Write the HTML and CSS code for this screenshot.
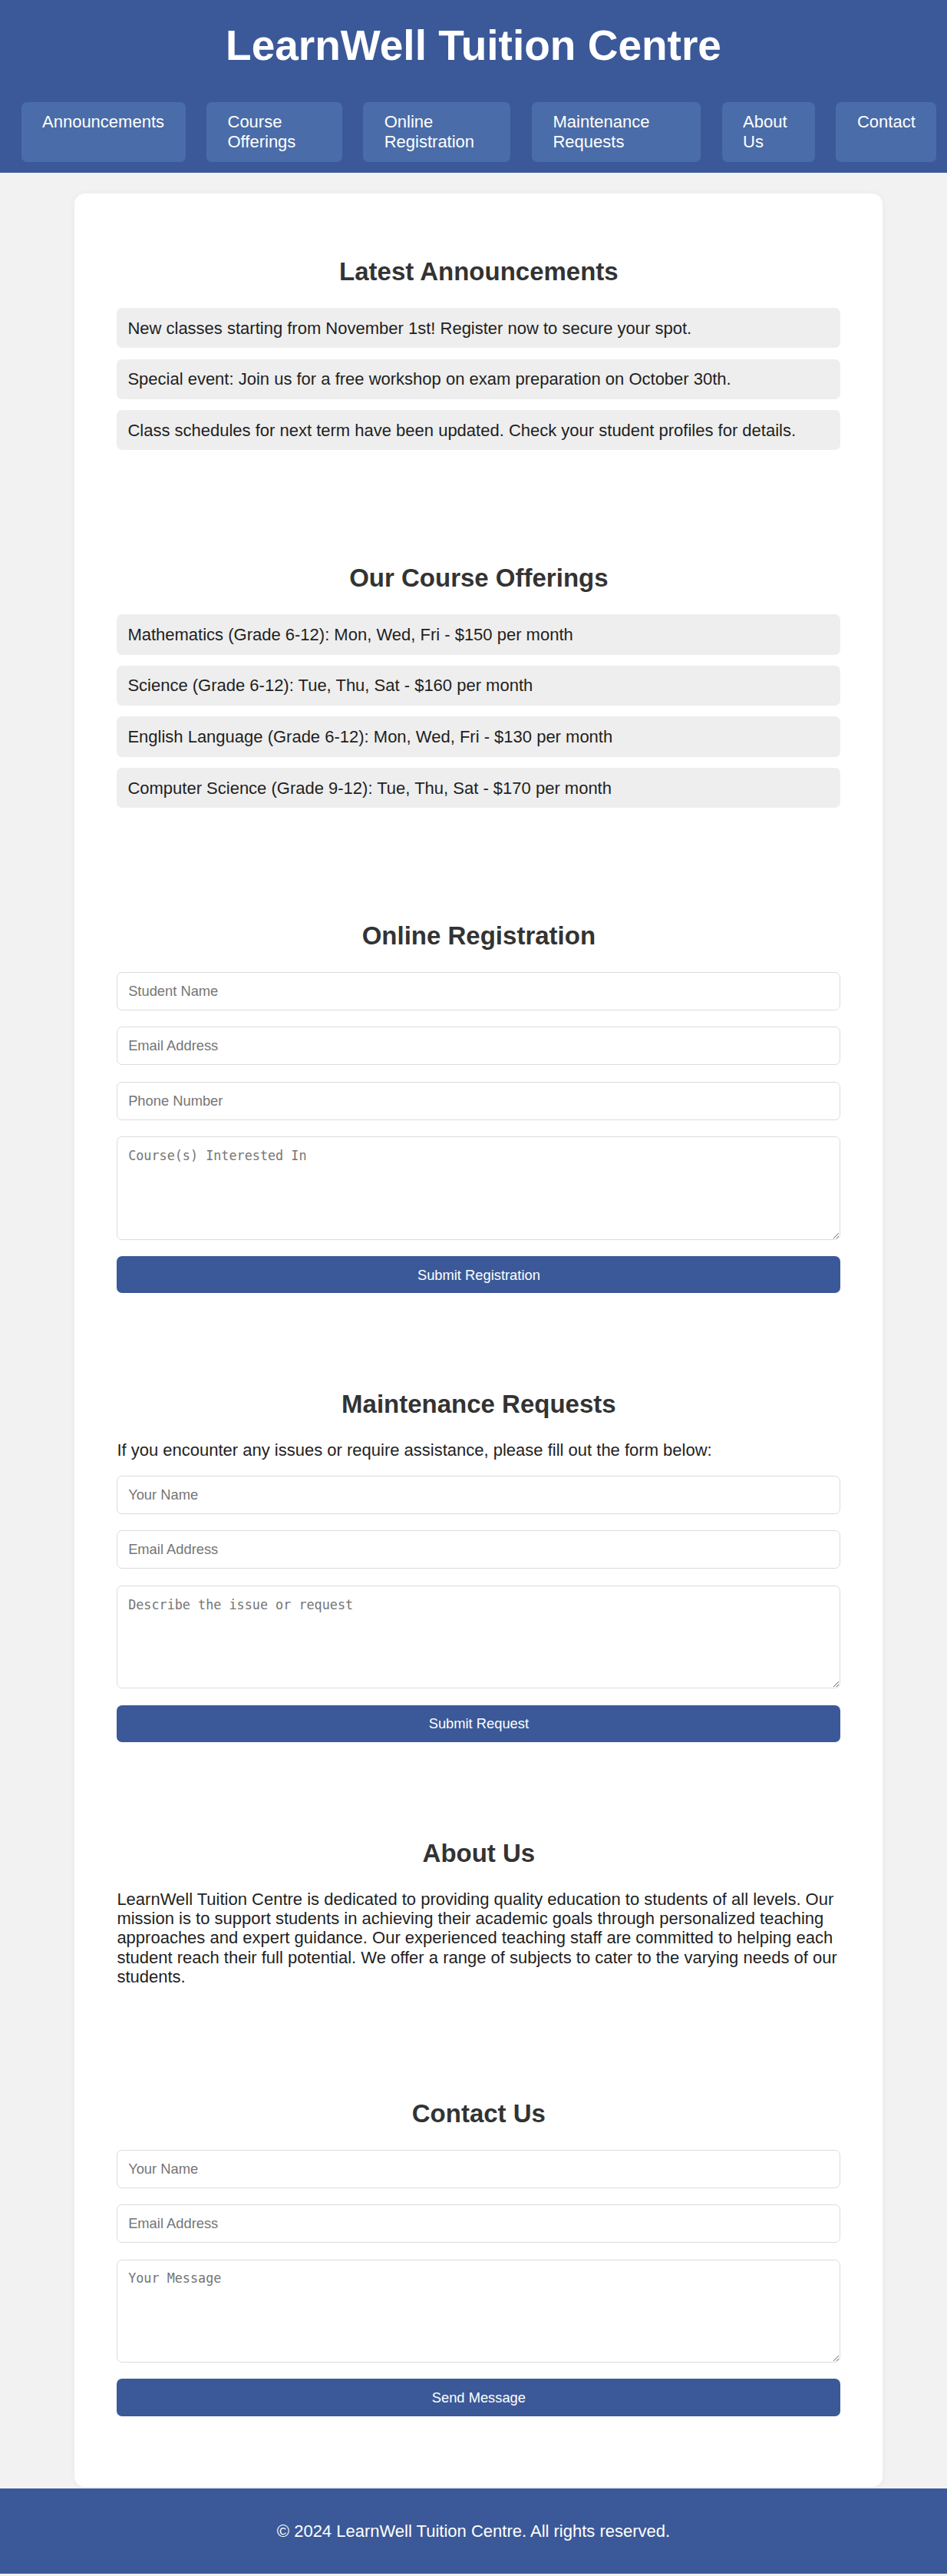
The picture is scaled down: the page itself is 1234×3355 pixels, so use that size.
FILE: index.html
```html
<!DOCTYPE html>
<html lang="en">
<head>
<meta charset="utf-8">
<title>LearnWell Tuition Centre</title>
<link rel="stylesheet" href="styles.css">
</head>
<body>
<header class="site-header">
  <h1 class="site-title">LearnWell Tuition Centre</h1>
  <nav class="main-nav">
    <a class="nav-link" href="#announcements">Announcements</a>
    <a class="nav-link" href="#courses">Course Offerings</a>
    <a class="nav-link" href="#registration">Online Registration</a>
    <a class="nav-link" href="#maintenance">Maintenance Requests</a>
    <a class="nav-link" href="#about">About Us</a>
    <a class="nav-link" href="#contact">Contact</a>
  </nav>
</header>

<div class="page">
  <main class="card">
    <section class="section" id="announcements">
      <h2 class="section-title">Latest Announcements</h2>
      <ul class="item-list">
        <li class="item">New classes starting from November 1st! Register now to secure your spot.</li>
        <li class="item">Special event: Join us for a free workshop on exam preparation on October 30th.</li>
        <li class="item">Class schedules for next term have been updated. Check your student profiles for details.</li>
      </ul>
    </section>

    <section class="section" id="courses">
      <h2 class="section-title">Our Course Offerings</h2>
      <ul class="item-list">
        <li class="item">Mathematics (Grade 6-12): Mon, Wed, Fri - $150 per month</li>
        <li class="item">Science (Grade 6-12): Tue, Thu, Sat - $160 per month</li>
        <li class="item">English Language (Grade 6-12): Mon, Wed, Fri - $130 per month</li>
        <li class="item">Computer Science (Grade 9-12): Tue, Thu, Sat - $170 per month</li>
      </ul>
    </section>

    <section class="section" id="registration">
      <h2 class="section-title">Online Registration</h2>
      <form class="form">
        <input class="field" type="text" placeholder="Student Name">
        <input class="field" type="email" placeholder="Email Address">
        <input class="field" type="tel" placeholder="Phone Number">
        <textarea class="field area" placeholder="Course(s) Interested In"></textarea>
        <button class="submit" type="button">Submit Registration</button>
      </form>
    </section>

    <section class="section" id="maintenance">
      <h2 class="section-title">Maintenance Requests</h2>
      <p class="lead">If you encounter any issues or require assistance, please fill out the form below:</p>
      <form class="form">
        <input class="field" type="text" placeholder="Your Name">
        <input class="field" type="email" placeholder="Email Address">
        <textarea class="field area" placeholder="Describe the issue or request"></textarea>
        <button class="submit" type="button">Submit Request</button>
      </form>
    </section>

    <section class="section" id="about">
      <h2 class="section-title">About Us</h2>
      <p class="about-text">LearnWell Tuition Centre is dedicated to providing quality education to students of all levels. Our mission is to support students in achieving their academic goals through personalized teaching approaches and expert guidance. Our experienced teaching staff are committed to helping each student reach their full potential. We offer a range of subjects to cater to the varying needs of our students.</p>
    </section>

    <section class="section" id="contact">
      <h2 class="section-title">Contact Us</h2>
      <form class="form">
        <input class="field" type="text" placeholder="Your Name">
        <input class="field" type="email" placeholder="Email Address">
        <textarea class="field area" placeholder="Your Message"></textarea>
        <button class="submit" type="button">Send Message</button>
      </form>
    </section>
  </main>
</div>

<footer class="site-footer">
  <p class="footer-text">&copy; 2024 LearnWell Tuition Centre. All rights reserved.</p>
</footer>
</body>
</html>
```

FILE: styles.css
```css
* {
  box-sizing: border-box;
}

html, body {
  margin: 0;
  padding: 0;
}

body {
  background: #f2f2f2;
  font-family: "Liberation Sans", Arial, Helvetica, sans-serif;
  font-size: 22px;
  color: #1f1f1f;
}

/* ---------- header ---------- */
.site-header {
  background: #3b5998;
  padding: 27.5px 0 14px;
}

.site-title {
  margin: 0;
  text-align: center;
  color: #ffffff;
  font-size: 55px;
  font-weight: bold;
  line-height: 63px;
}

.main-nav {
  display: flex;
  margin-top: 42px;
  padding-left: 13.75px;
}

.nav-link {
  display: block;
  margin: 0 13.75px;
  padding: 13.75px 27.5px;
  background: #4a6ca8;
  color: #ffffff;
  text-decoration: none;
  font-size: 22px;
  line-height: 25.3px;
  border-radius: 7px;
}

/* ---------- card ---------- */
.page {
  padding-left: 13.75px;
}

.card {
  display: block;
  max-width: 1053px;
  margin: 27.5px auto 2px;
  padding: 27.5px 55px 22px;
  background: #ffffff;
  border-radius: 13.75px;
  box-shadow: 0 0 10px rgba(0, 0, 0, 0.04);
}

.section {
  padding: 27.5px 0;
  margin-bottom: 28.9px;
}

.section-title {
  margin: 28px 0 28px;
  text-align: center;
  color: #333333;
  font-size: 33px;
  font-weight: bold;
  line-height: 37.9px;
}

/* ---------- lists ---------- */
.item-list {
  list-style: none;
  margin: 0 0 36px;
  padding: 0;
  display: flex;
  flex-direction: column;
  gap: 14.3px;
}

.item {
  background: #eeeeee;
  border-radius: 7px;
  padding: 13.5px 14px;
  line-height: 25.3px;
}

/* ---------- text ---------- */
.lead {
  margin: 0 0 21px;
  line-height: 25.3px;
}

.about-text {
  margin: 0 0 35px;
  line-height: 25.3px;
}

/* ---------- forms ---------- */
.form {
  display: flex;
  flex-direction: column;
  margin: 0;
}

.field {
  display: block;
  width: 100%;
  margin: 0 0 21.3px;
  padding: 13.75px;
  border: 1px solid #dcdcdc;
  border-radius: 7px;
  background: #ffffff;
  font-family: "Liberation Sans", Arial, sans-serif;
  font-size: 18.33px;
  line-height: 21px;
  color: #222222;
  height: 50px;
}

.field::placeholder {
  color: #757575;
}

.area {
  height: 134.5px;
  font-family: "DejaVu Sans Mono", "Liberation Mono", monospace;
  font-size: 16.8px;
  line-height: 21px;
  resize: vertical;
}

.submit {
  display: block;
  width: 100%;
  margin: 0 0 13.75px;
  padding: 13.75px;
  border: none;
  border-radius: 7px;
  background: #3b5998;
  color: #ffffff;
  font-family: "Liberation Sans", Arial, sans-serif;
  font-size: 18.33px;
  line-height: 21px;
  cursor: pointer;
}

/* ---------- footer ---------- */
.site-footer {
  background: #3b5998;
  padding: 43px 0;
}

.footer-text {
  margin: 0;
  text-align: center;
  color: #ffffff;
  font-size: 22px;
  line-height: 25.3px;
}
```
